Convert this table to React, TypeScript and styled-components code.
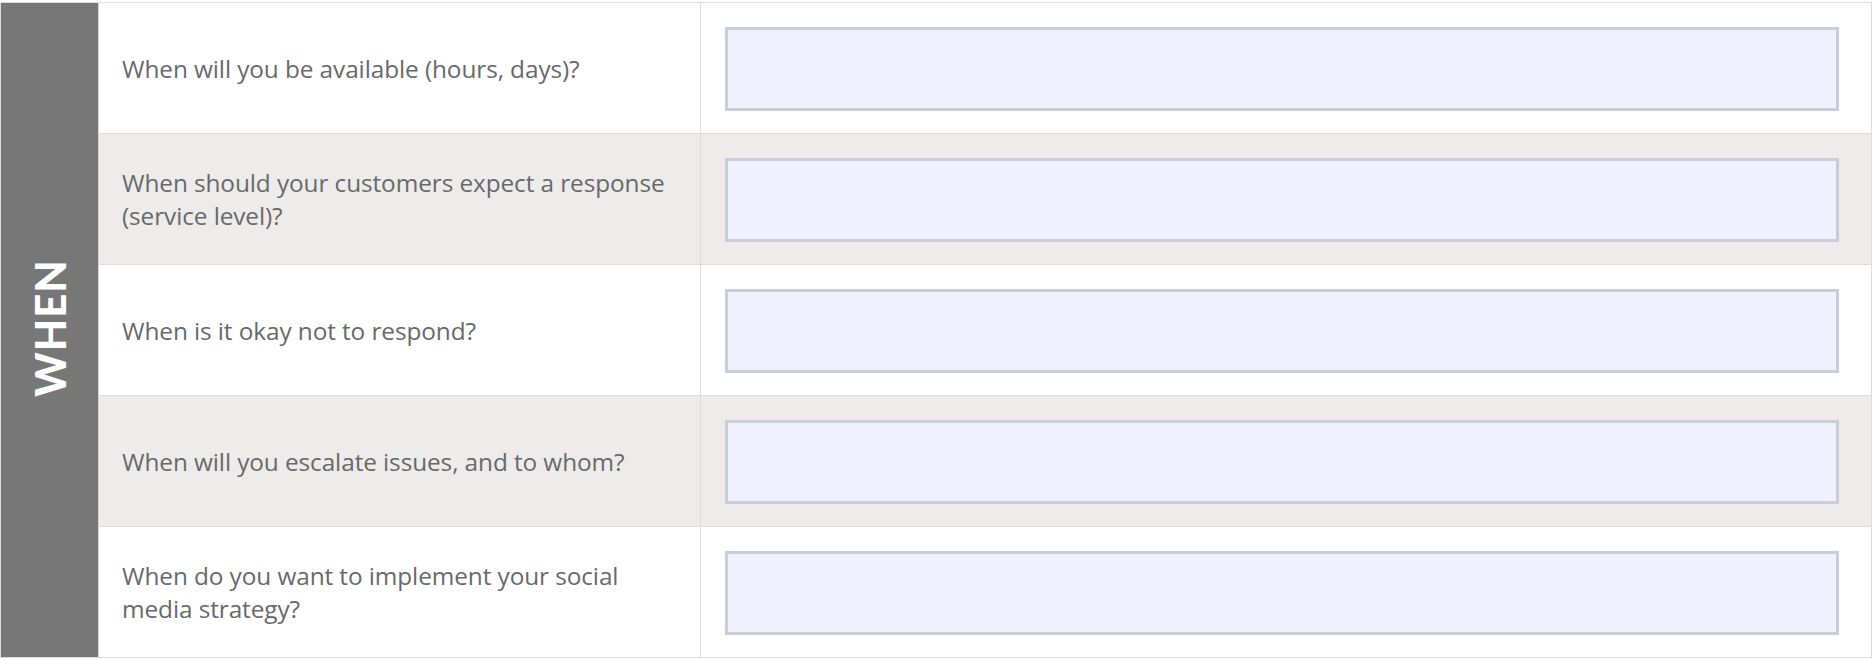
import React from "react";
import styled, { createGlobalStyle } from "styled-components";

const GlobalStyle = createGlobalStyle`
  html, body {
    margin: 0;
    padding: 0;
    background: #ffffff;
  }
  body {
    font-family: "Open Sans", Lato, sans-serif;
  }
`;

const Page = styled.div`
  padding-top: 2px;
  width: 1874px;
`;

const Table = styled.div`
  display: grid;
  grid-template-columns: 98px 1fr;
  width: 1870px;
  border: 1px solid #dddddd;
`;

const SideBar = styled.div`
  background: #777777;
  border-right: 1px solid #d6d6d6;
  display: flex;
  align-items: center;
  justify-content: center;
`;

const SideTitle = styled.span`
  color: #ffffff;
  font-family: Lato, sans-serif;
  font-weight: 900;
  font-size: 42px;
  letter-spacing: 1px;
  transform: rotate(-90deg);
  white-space: nowrap;
  display: inline-block;
  margin-top: -4px;
`;

const Rows = styled.div`
  display: flex;
  flex-direction: column;
`;

const Row = styled.div<{ $alt: boolean; $last: boolean }>`
  display: grid;
  grid-template-columns: 602px 1fr;
  height: 130px;
  background: ${(p) => (p.$alt ? "#edecea" : "#ffffff")};
  border-bottom: ${(p) => (p.$last ? "none" : "1px solid #dcdcdc")};
`;

const Label = styled.div`
  display: flex;
  align-items: center;
  padding: 0 28px 0 23px;
  border-right: 1px solid #dcdcdc;
  color: #69696b;
  font-family: "Open Sans", Lato, sans-serif;
  font-size: 24.4px;
  line-height: 33px;
  font-weight: 500;
  letter-spacing: -0.1px;
`;

const InputCell = styled.div`
  padding: 24px 32px 22px 24px;
  display: flex;
`;

const InputBox = styled.div`
  flex: 1;
  background: #eff2fe;
  border: 3px solid #cbccd9;
  box-sizing: border-box;
`;

const questions = [
  "When will you be available (hours, days)?",
  "When should your customers expect a response (service level)?",
  "When is it okay not to respond?",
  "When will you escalate issues, and to whom?",
  "When do you want to implement your social media strategy?",
];

export default function App() {
  return (
    <Page>
      <GlobalStyle />
      <Table>
        <SideBar>
          <SideTitle>WHEN</SideTitle>
        </SideBar>
        <Rows>
          {questions.map((q, i) => (
            <Row key={i} $alt={i % 2 === 1} $last={i === questions.length - 1}>
              <Label>{q}</Label>
              <InputCell>
                <InputBox />
              </InputCell>
            </Row>
          ))}
        </Rows>
      </Table>
    </Page>
  );
}
